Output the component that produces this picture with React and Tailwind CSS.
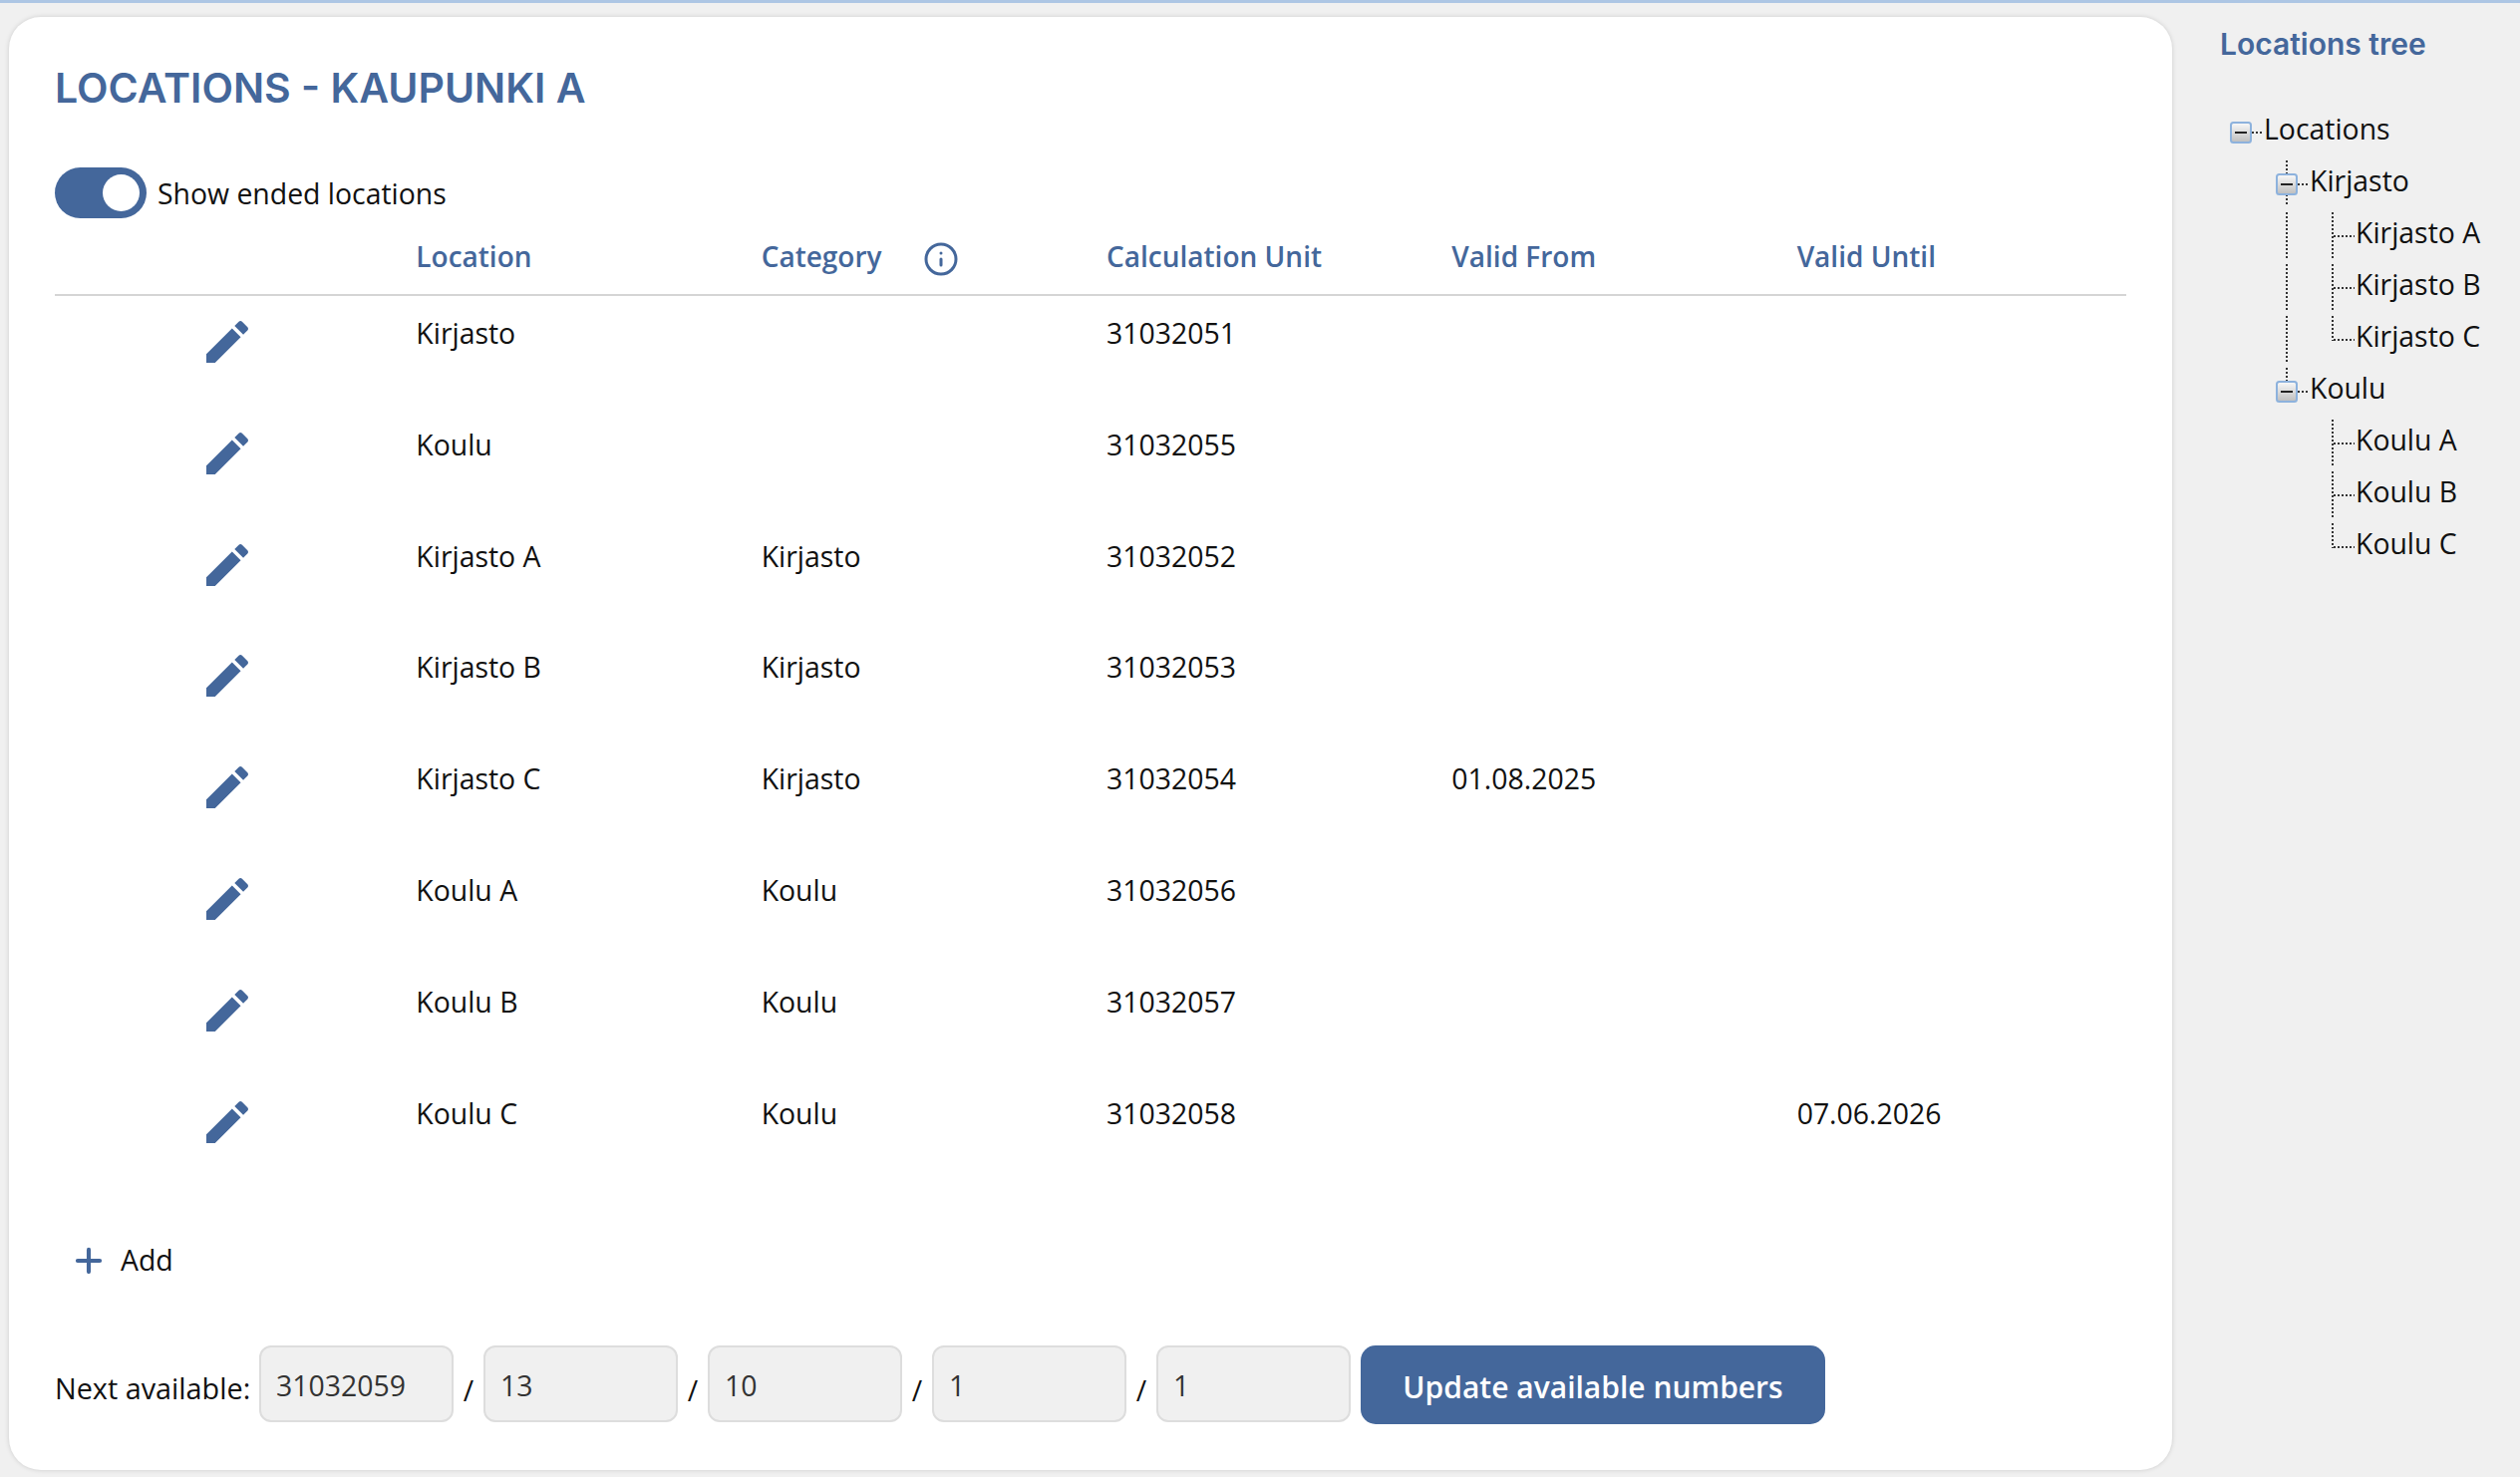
// Locations page: table of locations on the left, ASP.NET style tree on the right.
import { Info, Plus } from 'lucide-react';

const ROWS = [
  { name: 'Kirjasto', category: '', unit: '31032051', from: '', until: '' },
  { name: 'Koulu', category: '', unit: '31032055', from: '', until: '' },
  { name: 'Kirjasto A', category: 'Kirjasto', unit: '31032052', from: '', until: '' },
  { name: 'Kirjasto B', category: 'Kirjasto', unit: '31032053', from: '', until: '' },
  { name: 'Kirjasto C', category: 'Kirjasto', unit: '31032054', from: '01.08.2025', until: '' },
  { name: 'Koulu A', category: 'Koulu', unit: '31032056', from: '', until: '' },
  { name: 'Koulu B', category: 'Koulu', unit: '31032057', from: '', until: '' },
  { name: 'Koulu C', category: 'Koulu', unit: '31032058', from: '', until: '07.06.2026' },
];

const NUMBERS = ['31032059', '13', '10', '1', '1'];

// cells: connector drawn per indent column, 46px each
const TREE = [
  { label: 'Locations', cells: ['root'] },
  { label: 'Kirjasto', cells: ['none', 'open'] },
  { label: 'Kirjasto A', cells: ['none', 'pipe', 'tee'] },
  { label: 'Kirjasto B', cells: ['none', 'pipe', 'tee'] },
  { label: 'Kirjasto C', cells: ['none', 'pipe', 'ell'] },
  { label: 'Koulu', cells: ['none', 'last'] },
  { label: 'Koulu A', cells: ['none', 'none', 'tee'] },
  { label: 'Koulu B', cells: ['none', 'none', 'tee'] },
  { label: 'Koulu C', cells: ['none', 'none', 'ell'] },
];

function PencilIcon() {
  return (
    <svg viewBox="0 0 24 24" className="w-14 h-14 fill-[#44679b]">
      <path d="M3 17.25V21h3.75L17.81 9.94l-3.75-3.75L3 17.25zM20.71 7.04c.39-.39.39-1.02 0-1.41l-2.34-2.34c-.39-.39-1.02-.39-1.41 0l-1.83 1.83 3.75 3.75 1.83-1.83z" />
    </svg>
  );
}

function TreeCell({ kind }) {
  const dots = { stroke: '#333', strokeWidth: 2, strokeDasharray: '2 2' };
  const hasBox = kind === 'root' || kind === 'open' || kind === 'last';
  return (
    <svg width="46" height="52" viewBox="0 0 46 52" className="shrink-0">
      {(kind === 'pipe' || kind === 'tee') && <line x1="23" y1="6" x2="23" y2="52" {...dots} />}
      {kind === 'ell' && <line x1="23" y1="6" x2="23" y2="31" {...dots} />}
      {(kind === 'tee' || kind === 'ell') && <line x1="24" y1="30" x2="45" y2="30" {...dots} />}
      {(kind === 'open' || kind === 'last') && <line x1="23" y1="6" x2="23" y2="20" {...dots} />}
      {kind === 'open' && <line x1="23" y1="40" x2="23" y2="51" {...dots} />}
      {hasBox && (
        <>
          <line x1="34" y1="30" x2="44" y2="30" {...dots} />
          <defs>
            <linearGradient id="box" x1="0" y1="0" x2="0" y2="1">
              <stop offset="0" stopColor="#fafafa" />
              <stop offset="1" stopColor="#bdbdbd" />
            </linearGradient>
          </defs>
          <rect x="13" y="20" width="20" height="20" rx="2.5" fill="url(#box)" stroke="#8db2dd" strokeWidth="2" />
          <rect x="17" y="29" width="12" height="2" fill="#222" />
        </>
      )}
    </svg>
  );
}

export default function App() {
  return (
    <div className="min-h-[1482px] bg-[#f0f0f0] font-['Open_Sans',sans-serif] text-[28.4px] text-[#111]">
      <div className="h-[3px] bg-[#adc6e4]" />
      <div className="flex items-start pt-[14px] pl-[9px]">
        {/* Main card */}
        <div className="w-[2170px] shrink-0 rounded-[32px] bg-white pt-[41px] pl-[46px] pr-[46px] pb-[46px] shadow-[0_0_5px_rgba(0,0,0,0.15)]">
          <h1 className="mb-[50px] font-['Inter',sans-serif] text-[41px] leading-[60px] font-semibold text-[#44679b]">
            LOCATIONS - KAUPUNKI A
          </h1>

          <div className="flex items-center gap-[11px]">
            <div className="flex h-[51px] w-[92px] items-center justify-end rounded-full bg-[#44679b] pr-[7px]">
              <div className="h-[37px] w-[37px] rounded-full bg-white" />
            </div>
            <span className="mt-[2px]">Show ended locations</span>
          </div>

          {/* Table */}
          <div className="grid h-[78px] grid-cols-6 items-center border-b-2 border-[#d5d5d5] text-[28px] font-semibold text-[#44679b]">
            <div />
            <div className="pl-4">Location</div>
            <div className="flex items-center gap-[44px] pl-4">
              <span>Category</span>
              <Info className="mt-[5px] h-9 w-9 -ml-[3px]" strokeWidth={2} />
            </div>
            <div className="pl-4">Calculation Unit</div>
            <div className="pl-4">Valid From</div>
            <div className="pl-4">Valid Until</div>
          </div>
          {ROWS.map((row) => (
            <div key={row.unit} className="grid h-[111.8px] grid-cols-6 pt-[17px] leading-10">
              <div className="flex justify-center pt-[1px]">
                <PencilIcon />
              </div>
              <div className="pl-4">{row.name}</div>
              <div className="pl-4">{row.category}</div>
              <div className="pl-4">{row.unit}</div>
              <div className="pl-4">{row.from}</div>
              <div className="pl-4">{row.until}</div>
            </div>
          ))}

          <div className="mt-[50px] flex h-12 items-center pl-[15px]">
            <Plus className="h-[38px] w-[38px] text-[#44679b]" strokeWidth={2.6} />
            <span className="ml-[13px] -mt-[2px]">Add</span>
          </div>

          {/* Next available numbers */}
          <div className="mt-[61px] flex h-[79px] items-start">
            <span className="mt-[23px] w-[205px] shrink-0 whitespace-nowrap text-[28.8px] leading-10">Next available:</span>
            {NUMBERS.map((n, i) => (
              <div key={i} className="flex items-start">
                {i > 0 && <span className="mt-[25px] w-[30px] text-center leading-10">/</span>}
                <div className="h-[77px] w-[195px] rounded-xl border-2 border-[#ddd] bg-[#f0f0f0] pl-[15px] pt-[18px] leading-10 text-[#333]">
                  {n}
                </div>
              </div>
            ))}
            <button className="ml-[10px] h-[79px] w-[466px] rounded-[15px] bg-[#44679b] pt-1 text-[30px] font-semibold text-white">
              Update available numbers
            </button>
          </div>
        </div>

        {/* Tree */}
        <div className="ml-[48px]">
          <h2 className="mt-[7px] mb-[39px] font-['Inter',sans-serif] text-[30px] leading-10 font-semibold text-[#44679b]">
            Locations tree
          </h2>
          <div className="-ml-[2px]">
            {TREE.map((node) => (
              <div key={node.label} className="flex h-[52px]">
                {node.cells.map((kind, i) => (
                  <TreeCell key={i} kind={kind} />
                ))}
                <span className="leading-[52px]">{node.label}</span>
              </div>
            ))}
          </div>
        </div>
      </div>
    </div>
  );
}
